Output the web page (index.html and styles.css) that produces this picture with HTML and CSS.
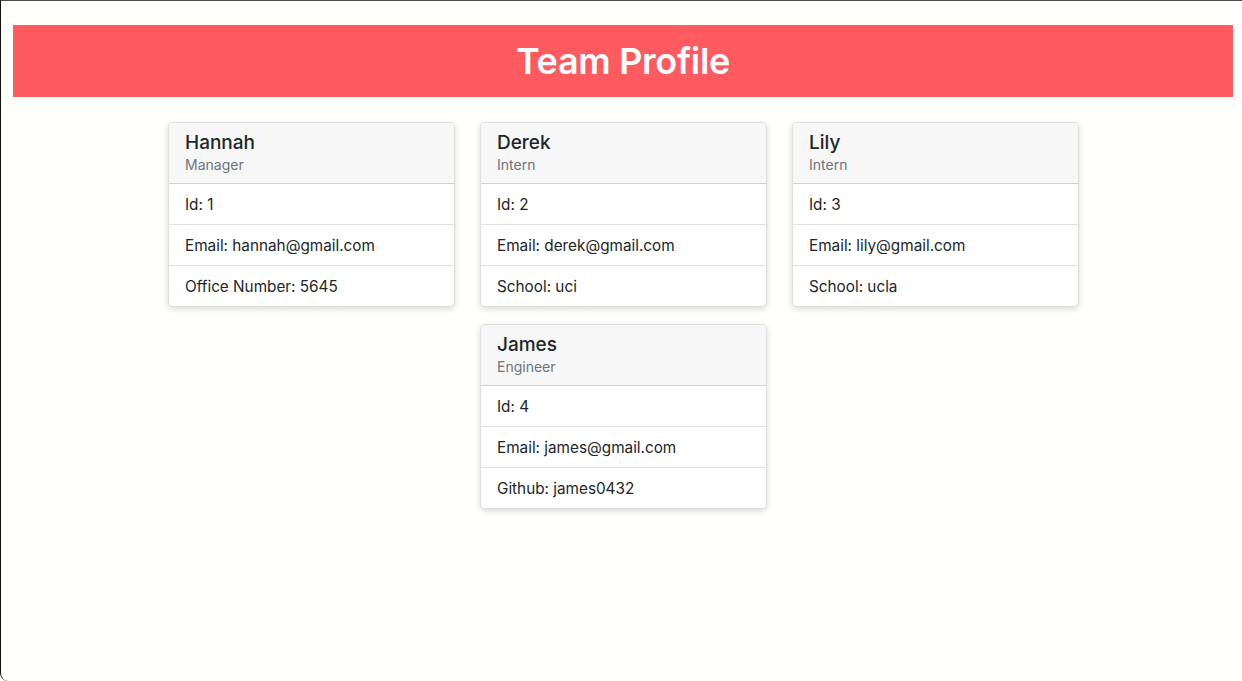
FILE: index.html
```html
<!DOCTYPE html>
<html lang="en">
<head>
<meta charset="utf-8">
<title>Team Profile</title>
<link rel="stylesheet" href="styles.css">
</head>
<body>
<div class="window">
  <header class="banner"><h1>Team Profile</h1></header>
  <main class="team">
    <section class="card">
      <div class="card-head"><h2>Hannah</h2><p>Manager</p></div>
      <ul class="rows"><li>Id: 1</li><li>Email: hannah@gmail.com</li><li>Office Number: 5645</li></ul>
    </section>
    <section class="card">
      <div class="card-head"><h2>Derek</h2><p>Intern</p></div>
      <ul class="rows"><li>Id: 2</li><li>Email: derek@gmail.com</li><li>School: uci</li></ul>
    </section>
    <section class="card">
      <div class="card-head"><h2>Lily</h2><p>Intern</p></div>
      <ul class="rows"><li>Id: 3</li><li>Email: lily@gmail.com</li><li>School: ucla</li></ul>
    </section>
    <section class="card">
      <div class="card-head"><h2>James</h2><p>Engineer</p></div>
      <ul class="rows"><li>Id: 4</li><li>Email: james@gmail.com</li><li>Github: james0432</li></ul>
    </section>
  </main>
</div>
</body>
</html>
```
FILE: styles.css
```css
html, body { margin: 0; padding: 0; }
body {
  background: #fffffc;
  font-family: Inter, "Noto Sans", sans-serif;
  color: #212529;
}
.window {
  height: 681px;
  box-sizing: border-box;
  border-top: 1px solid #4a4a4a;
  border-left: 1px solid #111;
  border-bottom-left-radius: 8px;
  padding: 24px 9px 0 12px;
}
.banner {
  background: #ff5a5f;
  height: 72px;
  display: flex;
  align-items: center;
  justify-content: center;
}
.banner h1 {
  margin: 0;
  color: #fff;
  font-size: 36px;
  font-weight: 600;
  letter-spacing: -0.3px;
}
.team {
  width: 911px;
  margin: 25px 0 0 155px;
  display: flex;
  flex-wrap: wrap;
  justify-content: center;
  column-gap: 25px;
  row-gap: 17px;
}
.card {
  width: 287px;
  box-sizing: border-box;
  background: #fff;
  border: 1px solid rgba(0,0,0,0.13);
  border-radius: 5px;
  box-shadow: 0 2px 6px rgba(0,0,0,0.15);
  overflow: hidden;
}
.card-head {
  background: #f7f7f7;
  height: 61px;
  box-sizing: border-box;
  padding: 8px 16px 0;
  border-bottom: 1px solid rgba(0,0,0,0.15);
}
.card-head h2 {
  margin: 0;
  font-size: 19px;
  font-weight: 500;
  line-height: 24px;
}
.card-head p {
  margin: 0;
  font-size: 14px;
  color: #6c757d;
  line-height: 20px;
}
.rows { list-style: none; margin: 0; padding: 0; }
.rows li {
  height: 41px;
  box-sizing: border-box;
  padding: 0 16px;
  display: flex;
  align-items: center;
  font-size: 15.3px;
  border-top: 1px solid rgba(0,0,0,0.12);
}
.rows li:first-child { border-top: 0; height: 40px; }
```
